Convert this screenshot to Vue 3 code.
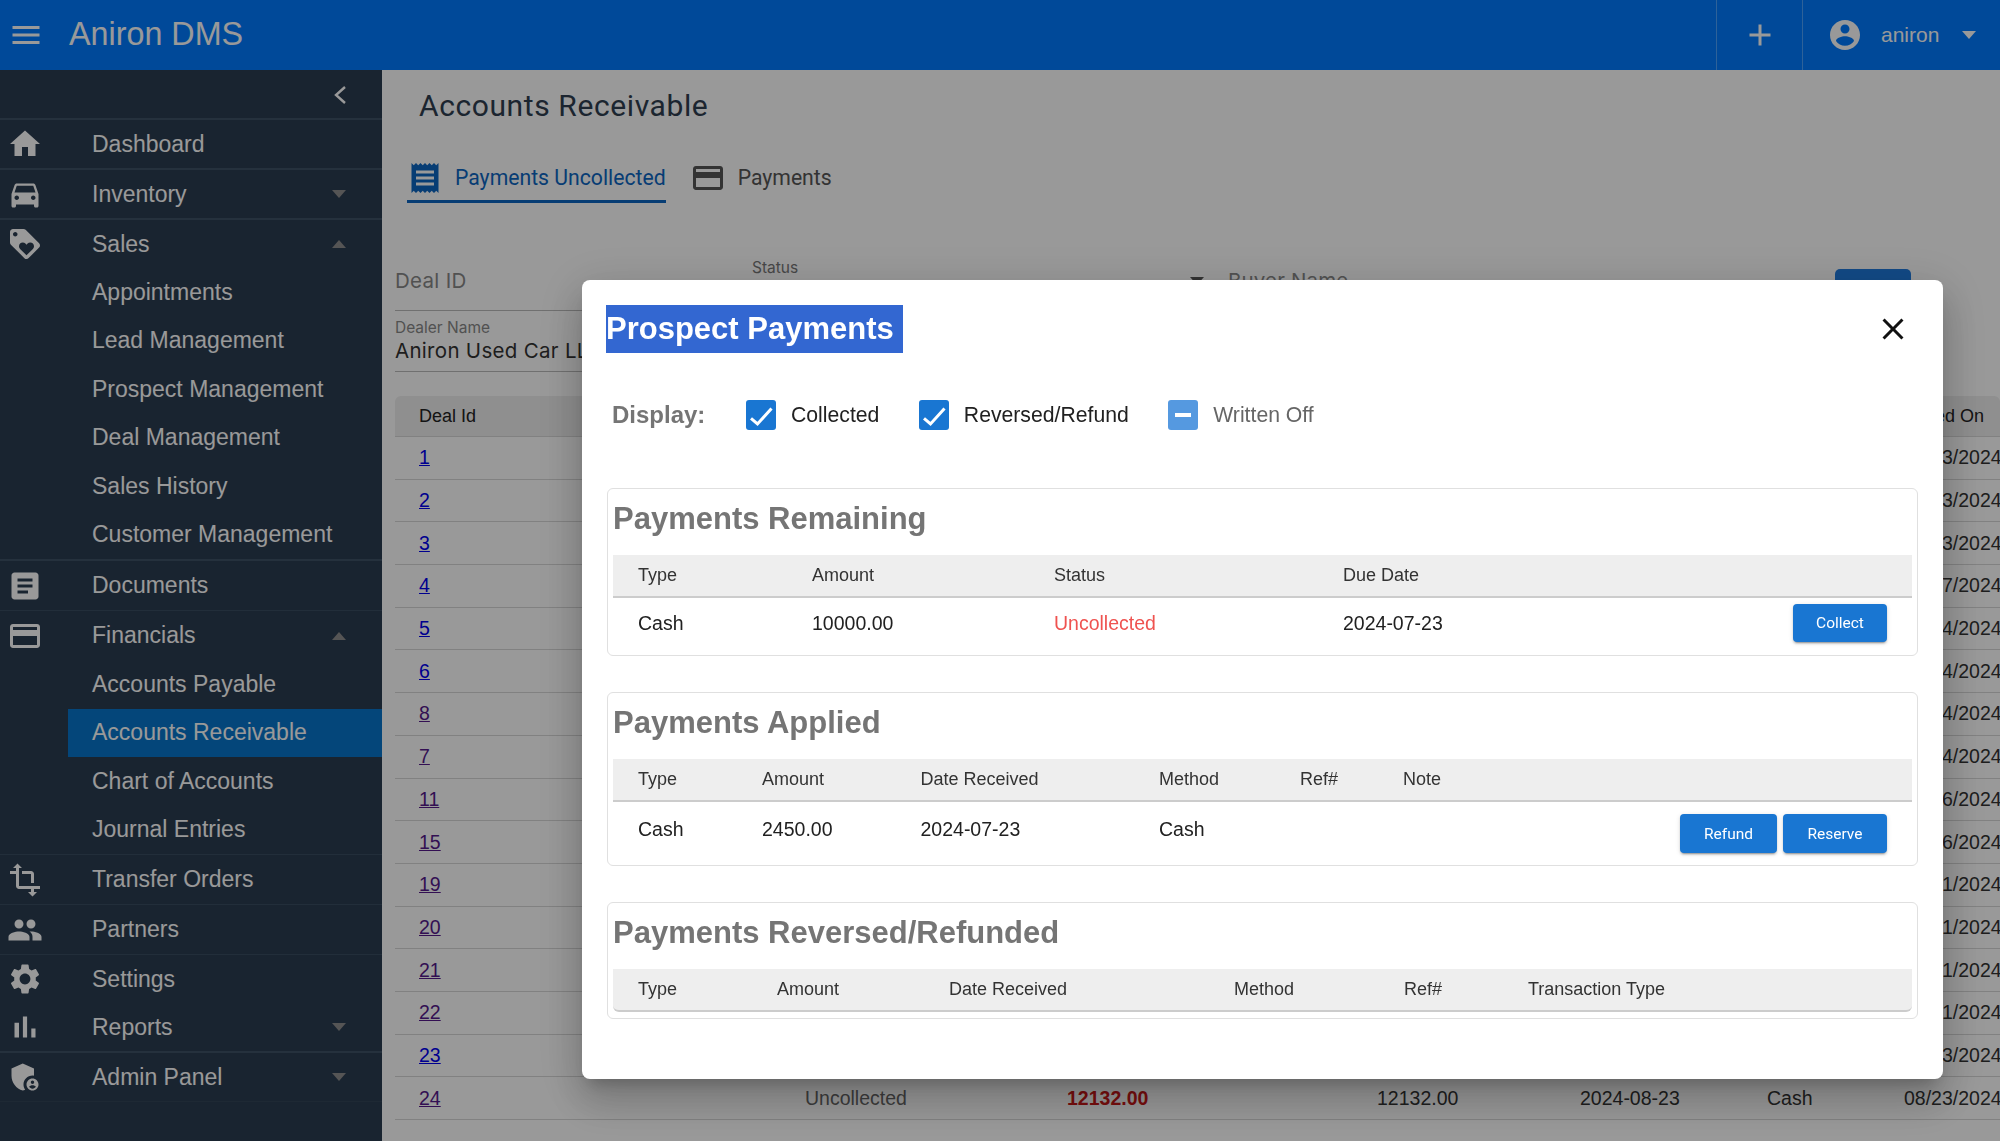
<script setup>
const icons = {
  home: 'M10 20v-6h4v6h5v-8h3L12 3 2 12h3v8z',
  car: 'M18.92 6.01C18.72 5.42 18.16 5 17.5 5h-11c-.66 0-1.21.42-1.42 1.01L3 12v8c0 .55.45 1 1 1h1c.55 0 1-.45 1-1v-1h12v1c0 .55.45 1 1 1h1c.55 0 1-.45 1-1v-8l-2.08-5.99zM6.5 16c-.83 0-1.5-.67-1.5-1.5S5.67 13 6.5 13s1.5.67 1.5 1.5S7.33 16 6.5 16zm11 0c-.83 0-1.5-.67-1.5-1.5s.67-1.5 1.5-1.5 1.5.67 1.5 1.5-.67 1.5-1.5 1.5zM5 11l1.5-4.5h11L19 11H5z',
  tag: 'M21.41 11.58l-9-9C12.05 2.22 11.55 2 11 2H4c-1.1 0-2 .9-2 2v7c0 .55.22 1.05.59 1.42l9 9c.36.36.86.58 1.41.58s1.05-.22 1.41-.59l7-7c.37-.36.59-.86.59-1.41s-.23-1.06-.59-1.42zM5.5 7C4.67 7 4 6.33 4 5.5S4.67 4 5.5 4 7 4.67 7 5.5 6.33 7 5.5 7zm11.77 8.27L13 19.54l-4.27-4.27C8.28 14.81 8 14.19 8 13.5c0-1.38 1.12-2.5 2.5-2.5.69 0 1.32.28 1.77.74l.73.72.73-.73c.45-.45 1.08-.73 1.77-.73 1.38 0 2.5 1.12 2.5 2.5 0 .69-.28 1.32-.73 1.77z',
  article: 'M19 3H5c-1.1 0-2 .9-2 2v14c0 1.1.9 2 2 2h14c1.1 0 2-.9 2-2V5c0-1.1-.9-2-2-2zm-5 14H7v-2h7v2zm3-4H7v-2h10v2zm0-4H7V7h10v2z',
  card: 'M20 4H4c-1.11 0-1.99.89-1.99 2L2 18c0 1.11.89 2 2 2h16c1.11 0 2-.89 2-2V6c0-1.11-.89-2-2-2zm0 14H4v-6h16v6zm0-10H4V6h16v2z',
  transform: 'M22 18v-2H8V4h2L7 1 4 4h2v2H2v2h4v8c0 1.1.9 2 2 2h8v2h-2l3 3 3-3h-2v-2h4zM10 8h6v6h2V8c0-1.1-.9-2-2-2h-6v2z',
  people: 'M16 11c1.66 0 2.99-1.34 2.99-3S17.66 5 16 5c-1.66 0-3 1.34-3 3s1.34 3 3 3zm-8 0c1.66 0 2.99-1.34 2.99-3S9.66 5 8 5C6.34 5 5 6.34 5 8s1.34 3 3 3zm0 2c-2.33 0-7 1.17-7 3.5V19h14v-2.5c0-2.33-4.67-3.5-7-3.5zm8 0c-.29 0-.62.02-.97.05 1.16.84 1.97 1.97 1.97 3.45V19h6v-2.5c0-2.33-4.67-3.5-7-3.5z',
  settings: 'M19.14 12.94c.04-.3.06-.61.06-.94 0-.32-.02-.64-.07-.94l2.03-1.58c.18-.14.23-.41.12-.61l-1.92-3.32c-.12-.22-.37-.29-.59-.22l-2.39.96c-.5-.38-1.03-.7-1.62-.94l-.36-2.54c-.04-.24-.24-.41-.48-.41h-3.84c-.24 0-.43.17-.47.41l-.36 2.54c-.59.24-1.13.57-1.62.94l-2.39-.96c-.22-.08-.47 0-.59.22L2.74 8.87c-.12.21-.08.47.12.61l2.03 1.58c-.05.3-.09.63-.09.94s.02.64.07.94l-2.03 1.58c-.18.14-.23.41-.12.61l1.92 3.32c.12.22.37.29.59.22l2.39-.96c.5.38 1.03.7 1.62.94l.36 2.54c.05.24.24.41.48.41h3.84c.24 0 .44-.17.47-.41l.36-2.54c.59-.24 1.13-.56 1.62-.94l2.39.96c.22.08.47 0 .59-.22l1.92-3.32c.12-.22.07-.47-.12-.61l-2.01-1.58zM12 15.6c-1.98 0-3.6-1.62-3.6-3.6s1.62-3.6 3.6-3.6 3.6 1.62 3.6 3.6-1.62 3.6-3.6 3.6z',
  chart: 'M5 9.2h3V19H5zM10.6 5h2.8v14h-2.8zm5.6 8H19v6h-2.8z',
  admin: 'M17 11c.34 0 .67.04 1 .09V6.27L10.5 3 3 6.27v4.91c0 4.54 3.2 8.79 7.5 9.82.55-.13 1.08-.32 1.6-.55-.69-.98-1.1-2.17-1.1-3.45 0-3.31 2.69-6 6-6zM17 13c-2.21 0-4 1.79-4 4s1.79 4 4 4 4-1.79 4-4-1.79-4-4-4zm0 1.38c.62 0 1.12.51 1.12 1.12s-.51 1.12-1.12 1.12-1.12-.51-1.12-1.12.5-1.12 1.12-1.12zm0 5.37c-.93 0-1.74-.46-2.24-1.17.05-.72 1.51-1.08 2.24-1.08s2.19.36 2.24 1.08c-.5.71-1.31 1.17-2.24 1.17z',
  receipt: 'M18 17H6v-2h12v2zm0-4H6v-2h12v2zm0-4H6V7h12v2zM3 22l1.5-1.5L6 22l1.5-1.5L9 22l1.5-1.5L12 22l1.5-1.5L15 22l1.5-1.5L18 22l1.5-1.5L21 22V2l-1.5 1.5L18 2l-1.5 1.5L15 2l-1.5 1.5L12 2l-1.5 1.5L9 2 7.5 3.5 6 2 4.5 3.5 3 2v20z',
  menu: 'M3 18h18v-2H3v2zm0-5h18v-2H3v2zm0-7v2h18V6H3z',
  add: 'M19 13h-6v6h-2v-6H5v-2h6V5h2v6h6v2z',
  account: 'M12 2C6.48 2 2 6.48 2 12s4.48 10 10 10 10-4.48 10-10S17.52 2 12 2zm0 3c1.66 0 3 1.34 3 3s-1.34 3-3 3-3-1.34-3-3 1.34-3 3-3zm0 14.2c-2.5 0-4.71-1.28-6-3.22.03-1.99 4-3.08 6-3.08 1.99 0 5.97 1.09 6 3.08-1.29 1.94-3.5 3.22-6 3.22z',
  close: 'M19 6.41L17.59 5 12 10.59 6.41 5 5 6.41 10.59 12 5 17.59 6.41 19 12 13.41 17.59 19 19 17.59 13.41 12z',
}

const nav = [
  { label: 'Dashboard', icon: 'home', line: 'thick' },
  { label: 'Inventory', icon: 'car', caret: 'down', line: 'thick' },
  {
    label: 'Sales', icon: 'tag', caret: 'up', line: 'thick',
    children: ['Appointments', 'Lead Management', 'Prospect Management', 'Deal Management', 'Sales History', 'Customer Management'],
  },
  { label: 'Documents', icon: 'article', line: 'thin' },
  {
    label: 'Financials', icon: 'card', caret: 'up', line: 'thin',
    children: ['Accounts Payable', 'Accounts Receivable', 'Chart of Accounts', 'Journal Entries'],
  },
  { label: 'Transfer Orders', icon: 'transform', line: 'thin' },
  { label: 'Partners', icon: 'people', line: 'thin' },
  { label: 'Settings', icon: 'settings', line: 'none' },
  { label: 'Reports', icon: 'chart', caret: 'down', line: 'thick' },
  { label: 'Admin Panel', icon: 'admin', caret: 'down', line: 'faint' },
]

const deals = [
  { id: 1, date: '07/23/2024' },
  { id: 2, date: '07/23/2024' },
  { id: 3, date: '07/23/2024' },
  { id: 4, date: '08/17/2024' },
  { id: 5, date: '08/14/2024' },
  { id: 6, date: '08/14/2024' },
  { id: 8, date: '08/14/2024', visited: true },
  { id: 7, date: '08/14/2024', visited: true },
  { id: 11, date: '08/16/2024', visited: true },
  { id: 15, date: '08/16/2024', visited: true },
  { id: 19, date: '08/21/2024', visited: true },
  { id: 20, date: '08/21/2024', visited: true },
  { id: 21, date: '08/21/2024', visited: true },
  { id: 22, date: '08/21/2024', visited: true },
  { id: 23, date: '08/23/2024' },
  { id: 24, date: '08/23/2024', visited: true, status: 'Uncollected', amount: '12132.00', balance: '12132.00', due: '2024-08-23', method: 'Cash' },
]
</script>

<template>
  <div class="app">
    <header class="topbar">
      <svg class="icon menu" viewBox="0 0 24 24"><path :d="icons.menu" /></svg>
      <span class="brand">Aniron DMS</span>
      <div class="topbar-actions">
        <div class="action add"><svg class="icon" viewBox="0 0 24 24"><path :d="icons.add" /></svg></div>
        <div class="action user">
          <svg class="icon" viewBox="0 0 24 24"><path :d="icons.account" /></svg>
          <span class="username">aniron</span>
          <i class="caret down light"></i>
        </div>
      </div>
    </header>

    <div class="body">
      <aside class="sidebar">
        <div class="collapse">
          <svg width="14" height="20" viewBox="0 0 14 20"><path d="M12 2 3 10l9 8" fill="none" stroke="#fff" stroke-width="2.4" /></svg>
        </div>
        <div v-for="item in nav" :key="item.label" class="group" :class="item.line">
          <div class="row">
            <svg class="icon" viewBox="0 0 24 24"><path :d="icons[item.icon]" /></svg>
            <span class="row-label">{{ item.label }}</span>
            <i v-if="item.caret" class="caret" :class="item.caret"></i>
          </div>
          <div
            v-for="child in item.children"
            :key="child"
            class="sub-row"
            :class="{ active: child === 'Accounts Receivable' }"
          >{{ child }}</div>
        </div>
      </aside>

      <main class="main">
        <h1 class="page-title">Accounts Receivable</h1>
        <div class="tabs">
          <div class="tab active">
            <svg class="icon" viewBox="0 0 24 24"><path :d="icons.receipt" /></svg>
            Payments Uncollected
          </div>
          <div class="tab">
            <svg class="icon" viewBox="0 0 24 24"><path :d="icons.card" /></svg>
            Payments
          </div>
        </div>

        <div class="filters">
          <div class="field">Deal ID</div>
          <div class="field select">
            <span class="field-small">Status</span>
            <i class="caret down dark"></i>
          </div>
          <div class="field buyer">Buyer Name</div>
          <div class="search-btn"></div>
        </div>
        <div class="field dealer">
          <span class="field-small">Dealer Name</span>
          <span class="field-value">Aniron Used Car LLC</span>
        </div>

        <div class="deals">
          <div class="deal-row deal-head">
            <span>Deal Id</span><span></span><span></span><span></span><span></span><span></span>
            <span class="created">Created On</span>
          </div>
          <div v-for="deal in deals" :key="deal.id" class="deal-row">
            <a href="#" class="deal-link" :class="{ visited: deal.visited }">{{ deal.id }}</a>
            <span class="muted">{{ deal.status }}</span>
            <strong class="overdue">{{ deal.amount }}</strong>
            <span>{{ deal.balance }}</span>
            <span>{{ deal.due }}</span>
            <span>{{ deal.method }}</span>
            <span>{{ deal.date }}</span>
          </div>
        </div>
      </main>
    </div>

    <div class="scrim">
      <section class="modal">
        <div class="modal-head">
          <h2 class="modal-title"><span>Prospect Payments</span></h2>
          <svg class="icon close" viewBox="0 0 24 24"><path :d="icons.close" /></svg>
        </div>

        <div class="display">
          <span class="display-label">Display:</span>
          <label class="check">
            <span class="box"><svg width="30" height="30" viewBox="0 0 30 30"><path d="M5 18.300l6.500 5.700L25.500 8.500" fill="none" stroke="#fff" stroke-width="3" /></svg></span>
            Collected
          </label>
          <label class="check">
            <span class="box"><svg width="30" height="30" viewBox="0 0 30 30"><path d="M5 18.300l6.500 5.700L25.500 8.500" fill="none" stroke="#fff" stroke-width="3" /></svg></span>
            Reversed/Refund
          </label>
          <label class="check off">
            <span class="box"><i class="dash"></i></span>
            Written Off
          </label>
        </div>

        <div class="card">
          <h3>Payments Remaining</h3>
          <div class="grid remaining head">
            <span>Type</span><span>Amount</span><span>Status</span><span>Due Date</span>
          </div>
          <div class="grid remaining line">
            <span>Cash</span><span>10000.00</span><span class="red">Uncollected</span><span>2024-07-23</span>
            <div class="btns"><button>Collect</button></div>
          </div>
        </div>

        <div class="card">
          <h3>Payments Applied</h3>
          <div class="grid applied head">
            <span>Type</span><span>Amount</span><span>Date Received</span><span>Method</span><span>Ref#</span><span>Note</span>
          </div>
          <div class="grid applied line">
            <span>Cash</span><span>2450.00</span><span>2024-07-23</span><span>Cash</span><span></span><span></span>
            <div class="btns"><button class="big">Refund</button><button class="big">Reserve</button></div>
          </div>
        </div>

        <div class="card">
          <h3>Payments Reversed/Refunded</h3>
          <div class="grid reversed head last">
            <span>Type</span><span>Amount</span><span>Date Received</span><span>Method</span><span>Ref#</span><span>Transaction Type</span>
          </div>
        </div>
      </section>
    </div>
  </div>
</template>

<style scoped>
.app {
  display: flex;
  flex-direction: column;
  height: 1141px;
  overflow: hidden;
  background: #fff;
  font-family: "Liberation Sans", Arial, sans-serif;
  color: #212121;
}

.icon {
  width: 36px;
  height: 36px;
  flex: none;
  fill: currentColor;
}

.caret {
  display: block;
  width: 0;
  height: 0;
  border-left: 7.5px solid transparent;
  border-right: 7.5px solid transparent;
}
.caret.down { border-top: 8px solid #8e8e8e; }
.caret.up { border-bottom: 8px solid #8e8e8e; }
.caret.light { border-top-color: #fff; }
.caret.dark { border-top-color: #555; }

/* top bar */
.topbar {
  display: flex;
  align-items: center;
  height: 70px;
  flex: none;
  background: #007bff;
  color: #fff;
}
.menu { margin-left: 8px; }
.brand {
  margin-left: 25px;
  margin-top: -1px;
  font-size: 32.300px;
}
.topbar-actions {
  display: flex;
  height: 100%;
  margin-left: auto;
}
.action {
  display: flex;
  align-items: center;
  border-left: 1px solid rgba(255, 255, 255, .3);
}
.add {
  width: 85px;
  justify-content: center;
}
.user {
  width: 198px;
  padding-left: 24px;
  box-sizing: border-box;
}
.username {
  margin-left: 18px;
  font-size: 21px;
}
.user .caret { margin-left: 23px; }

/* sidebar */
.body {
  display: flex;
  flex: 1;
  min-height: 0;
}
.sidebar {
  width: 382px;
  flex: none;
  background: #2b3c50;
  color: #fff;
}
.collapse {
  display: flex;
  align-items: center;
  justify-content: flex-end;
  height: 46px;
  padding: 2px 35px 0 0;
  border-bottom: 2px solid #3f5266;
}
.group.thick { border-bottom: 2px solid #3f5266; }
.group.thin { border-bottom: 1px solid #3a4d62; }
.group.faint { border-bottom: 1px solid #334558; }
.row {
  display: flex;
  align-items: center;
  height: 48px;
  padding-left: 7px;
  font-size: 23px;
}
.group.thin .row { height: 49px; }
.row-label { margin-left: 49px; }
.row .caret { margin-left: auto; margin-right: 36px; }
.sub-row {
  display: flex;
  align-items: center;
  height: 48.5px;
  margin-left: 68px;
  padding-left: 24px;
  font-size: 23px;
}
.sub-row.active { background: #0876cb; }

/* page behind the dialog */
.main {
  flex: 1;
  min-width: 0;
  padding-left: 13px;
}
.page-title {
  margin: 0;
  height: 85px;
  padding: 18px 0 0 24px;
  box-sizing: border-box;
  font: 400 30px/36px Roboto, sans-serif;
  letter-spacing: .6px;
  color: #2f3e50;
}
.tabs {
  display: flex;
  gap: 24px;
  margin-left: 12px;
}
.tab {
  display: flex;
  align-items: center;
  gap: 12px;
  height: 48px;
  box-sizing: border-box;
  font: 400 21.200px Roboto, sans-serif;
  color: #555;
  border-bottom: 3px solid transparent;
}
.tab.active {
  color: #0d66c2;
  border-bottom-color: #0d66c2;
}
.filters {
  display: grid;
  grid-template-columns: 357px 476px 607px 76px;
  height: 108px;
}
.field {
  height: 108px;
  box-sizing: border-box;
  padding-top: 66px;
  font: 400 20.500px/24px Inter, sans-serif;
  letter-spacing: .3px;
  color: #888;
  border-bottom: 1px solid #bbb;
  margin-right: 16px;
}
.field.select {
  display: flex;
  justify-content: space-between;
  padding-top: 55px;
  padding-right: 8px;
}
.field.buyer { margin-right: 0; letter-spacing: .15px; }
.field-small { font-size: 15.500px; line-height: 20px; letter-spacing: 0; color: #888; }
.select .field-small { color: #777; }
.select .caret { margin-top: 19px; }
.search-btn {
  height: 60px;
  margin-top: 66px;
  border-radius: 5px;
  background: #1f7bdf;
}
.dealer {
  display: flex;
  flex-direction: column;
  width: 340px;
  height: 61px;
  padding-top: 7px;
  margin-right: 0;
}
.field-value { color: #333; line-height: 26px; white-space: nowrap; }
.deals {
  margin-top: 24px;
  font-size: 19.500px;
}
.deal-row {
  display: grid;
  grid-template-columns: 386px 262px 310px 203px 187px 137px 100px;
  align-items: center;
  height: 42.700px;
  box-sizing: border-box;
  padding-left: 24px;
  border-bottom: 1px solid #d8d8d8;
  color: #333;
  white-space: nowrap;
}
.deal-head {
  height: 41px;
  background: #eee;
  border-radius: 6px 6px 0 0;
  font-size: 18px;
  color: #222;
}
.created { margin-left: -13px; }
.deal-link { color: #0000ee; }
.deal-link.visited { color: #551a8b; }
.muted { color: #666; }
.overdue { color: #c91818; }

/* dialog */
.scrim {
  position: fixed;
  inset: 0;
  padding: 280px 0 0 582px;
  background: rgba(0, 0, 0, .4);
}
.modal {
  width: 1361px;
  height: 799px;
  box-sizing: border-box;
  padding: 25px 25px 0 24px;
  background: #fff;
  border-radius: 8px;
  box-shadow: 0 11px 15px -7px rgba(0, 0, 0, .2), 0 24px 38px 3px rgba(0, 0, 0, .14), 0 9px 46px 8px rgba(0, 0, 0, .12);
}
.modal-head {
  display: flex;
  align-items: center;
  justify-content: space-between;
  height: 48px;
}
.modal-title {
  margin: 0;
  font-size: 31px;
  line-height: 48px;
}
.modal-title span {
  display: block;
  padding-right: 9px;
  background: #3367d1;
  color: #fff;
}
.close {
  margin-right: 7px;
  color: #111;
}
.display {
  display: flex;
  align-items: center;
  height: 30px;
  margin: 47px 0 58px 6px;
}
.display-label {
  width: 134px;
  font-size: 24px;
  font-weight: 700;
  color: #757575;
}
.check {
  display: flex;
  align-items: center;
  gap: 15px;
  margin-right: 39.500px;
  font-size: 21.200px;
}
.box {
  display: flex;
  align-items: center;
  justify-content: center;
  width: 30px;
  height: 30px;
  border-radius: 3px;
  background: #1976d2;
}
.check.off { color: #666; }
.check.off .box { background: #5599e0; }
.dash {
  display: block;
  width: 16px;
  height: 4px;
  background: #fff;
}
.card {
  margin: 0 0 36px 1px;
  padding: 0 5px;
  border: 1px solid #e0e0e0;
  border-radius: 6px;
}
.card h3 {
  margin: 0;
  height: 66px;
  padding-top: 12px;
  box-sizing: border-box;
  font-size: 31px;
  line-height: 36px;
  color: #757575;
}
.grid {
  display: grid;
  align-items: center;
  padding: 0 25px;
}
.remaining { grid-template-columns: 174px 242px 289px 1fr auto; }
.applied { grid-template-columns: 124px 158.500px 238.500px 141px 103px 1fr auto; }
.reversed { grid-template-columns: 139px 172px 285px 170px 124px 1fr; }
.head {
  height: 43px;
  box-sizing: border-box;
  background: #eee;
  border-bottom: 2px solid #ccc;
  font-size: 18px;
  color: #333;
}
.head.last { margin-bottom: 6px; border-radius: 0 0 6px 6px; }
.line {
  padding-top: 6px;
  padding-bottom: 13px;
  font-size: 19.500px;
}
.applied.line {
  padding-top: 12px;
  padding-bottom: 12px;
}
.applied.line > span { padding-bottom: 8px; }
.red { color: #ef5350; }
.btns {
  display: flex;
  gap: 6px;
}
button {
  width: 94px;
  height: 38px;
  padding: 0;
  border: none;
  border-radius: 4px;
  background: #1976d2;
  color: #fff;
  font: 400 15.500px Roboto, sans-serif;
  box-shadow: 0 3px 1px -2px rgba(0, 0, 0, .2), 0 2px 2px 0 rgba(0, 0, 0, .14), 0 1px 5px 0 rgba(0, 0, 0, .12);
}
button.big { width: 97px; height: 39px; }
button.big + button.big { width: 104px; }
</style>
